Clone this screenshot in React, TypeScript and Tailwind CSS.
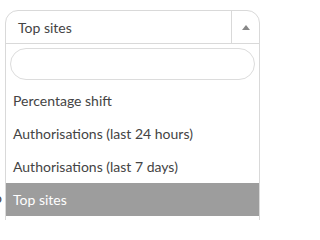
export default function App() {
  const options = [
    "Percentage shift",
    "Authorisations (last 24 hours)",
    "Authorisations (last 7 days)",
    "Top sites",
  ];
  const selected = "Top sites";

  return (
    <div className="relative w-[265px] h-[220px] overflow-hidden bg-white font-['Lato','Open_Sans',sans-serif] text-[14px] text-[#444]">
      {/* page text behind the open dropdown */}
      <div className="absolute left-[-6px] top-[190px] leading-[16px]">o</div>

      <div className="absolute left-[5px] top-[10px] w-[255px] border border-[#d9d9d9] rounded-t-[13px] bg-white">
        <div className="flex h-[33px] border-b border-[#d9d9d9]">
          <div className="flex-1 flex items-center pl-[12px] text-[#444]">{selected}</div>
          <div className="w-[28px] flex items-center justify-center border-l border-[#d9d9d9]">
            <svg width="8" height="5" viewBox="0 0 8 5">
              <path d="M0 5 L4 0 L8 5 Z" fill="#888" />
            </svg>
          </div>
        </div>
        <div className="p-[4px]">
          <div className="h-[32px] rounded-full border border-[#dcdcdc] bg-white" />
        </div>
        <ul>
          {options.map((o) => (
            <li
              key={o}
              className={`h-[33px] flex items-center pl-[7px] ${o === selected ? "bg-[#9d9d9d] text-white" : "text-[#444]"}`}
            >
              {o}
            </li>
          ))}
          <li className="h-[33px]" />
        </ul>
      </div>
    </div>
  );
}
